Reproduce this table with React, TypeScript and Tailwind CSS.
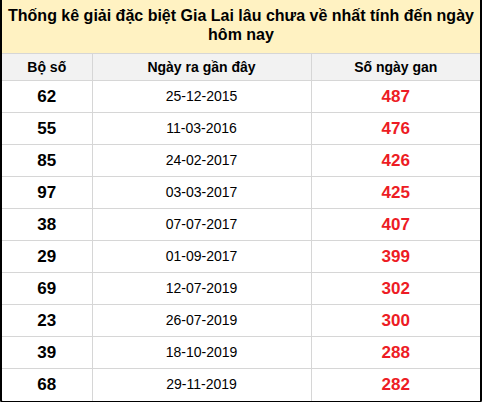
import React from 'react';

const rows = [
    ['62', '25-12-2015', '487'],
    ['55', '11-03-2016', '476'],
    ['85', '24-02-2017', '426'],
    ['97', '03-03-2017', '425'],
    ['38', '07-07-2017', '407'],
    ['29', '01-09-2017', '399'],
    ['69', '12-07-2019', '302'],
    ['23', '26-07-2019', '300'],
    ['39', '18-10-2019', '288'],
    ['68', '29-11-2019', '282'],
];

export default function App() {
    return (
        <div className="w-[482px] bg-white font-['Liberation_Sans',Arial,sans-serif] text-black">
            <div className="border-x-2 border-b-2 border-black rounded-b-[3px] overflow-hidden">
                <div className="bg-[#fff2c2] h-[53px] pt-[6px] text-center font-bold text-[16px] leading-[19px] -mx-[2px]">
                    Thống kê giải đặc biệt Gia Lai lâu chưa về nhất tính đến ngày hôm nay
                </div>
                <table className="w-full border-collapse table-fixed">
                    <colgroup>
                        <col className="w-[90px]" />
                        <col className="w-[219px]" />
                        <col />
                    </colgroup>
                    <thead>
                        <tr className="bg-[#f2f2f2]">
                            <th className="h-[27px] border border-[#d6d6d6] border-l-0 text-[14px] font-bold">Bộ số</th>
                            <th className="h-[27px] border border-[#d6d6d6] text-[14px] font-bold">Ngày ra gần đây</th>
                            <th className="h-[27px] border border-[#d6d6d6] border-r-0 text-[14px] font-bold">Số ngày gan</th>
                        </tr>
                    </thead>
                    <tbody>
                        {rows.map(([num, date, gan], i) => (
                            <tr key={num}>
                                <td className={`h-[32px] border border-[#d6d6d6] border-l-0 ${i === rows.length - 1 ? 'border-b-0' : ''} text-center font-bold text-[17px]`}>{num}</td>
                                <td className={`h-[32px] border border-[#d6d6d6] ${i === rows.length - 1 ? 'border-b-0' : ''} text-center text-[14px]`}>{date}</td>
                                <td className={`h-[32px] border border-[#d6d6d6] border-r-0 ${i === rows.length - 1 ? 'border-b-0' : ''} text-center font-bold text-[17px] text-[#ed1c24]`}>{gan}</td>
                            </tr>
                        ))}
                    </tbody>
                </table>
            </div>
        </div>
    );
}
